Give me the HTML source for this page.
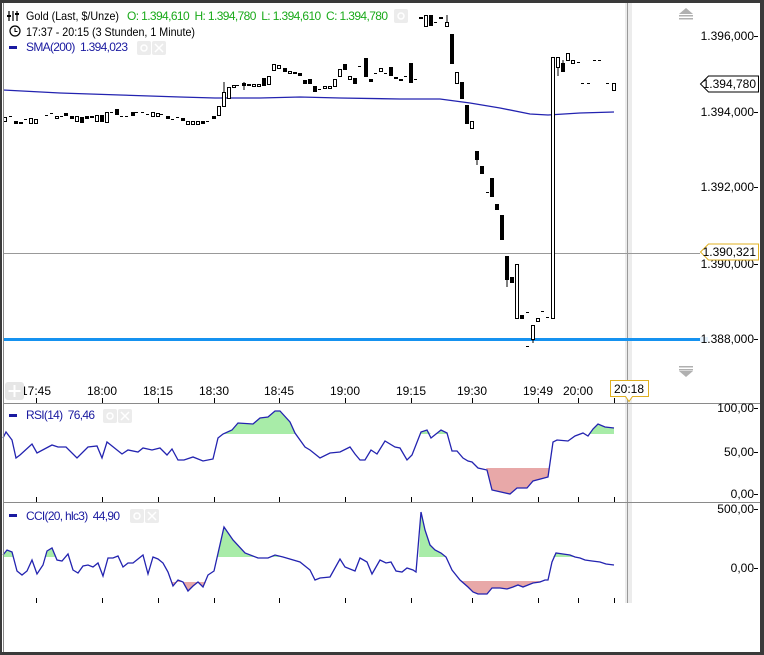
<!DOCTYPE html>
<html><head><meta charset="utf-8"><style>
body{margin:0;width:764px;height:655px;overflow:hidden;background:#fff;font-family:"Liberation Sans",Arial,sans-serif;}
svg{position:absolute;left:0;top:0}
text{font-family:"Liberation Sans",Arial,sans-serif;font-size:12px}
</style></head><body>
<svg width="764" height="655" viewBox="0 0 764 655" xmlns="http://www.w3.org/2000/svg">
<rect x="0" y="0" width="764" height="655" fill="#fff"/>
<rect x="625" y="3" width="7" height="600" fill="#ececec"/>
<line x1="627.5" y1="3" x2="627.5" y2="603" stroke="#999" stroke-width="1"/>
<line x1="3" y1="403.5" x2="760" y2="403.5" stroke="#8a8a8a"/>
<line x1="3" y1="502.5" x2="760" y2="502.5" stroke="#8a8a8a"/>
<line x1="3" y1="253.5" x2="700" y2="253.5" stroke="#999"/>
<rect x="3" y="338" width="697" height="3" fill="#1592f0"/>
<rect x="700" y="337" width="8" height="5" fill="#e4f1fc"/>
<polyline fill="none" stroke="#2323b0" stroke-width="1.3" points="3,90 60,93 120,95 180,97 215,98 260,98 300,97 340,98 400,99 440,99 470,103 500,108 530,114 548,115 580,113 614,112"/>
<g fill="#000" stroke="none">
<rect x="14" y="121" width="4" height="3"/><rect x="19" y="122" width="4" height="2"/><rect x="64" y="113" width="4" height="3"/><rect x="70" y="116" width="4" height="3"/><rect x="80" y="117" width="4" height="6"/><rect x="85" y="116" width="4" height="3"/><rect x="90" y="116" width="4" height="2"/><rect x="100" y="115" width="4" height="7"/><rect x="115" y="109" width="4" height="6"/><rect x="131" y="112" width="4" height="4"/><rect x="166" y="116" width="4" height="3"/><rect x="181" y="118" width="4" height="3"/><rect x="201" y="121" width="4" height="3"/><rect x="212" y="116" width="4" height="3"/>
<rect x="242" y="83" width="4" height="3"/><rect x="247" y="84" width="4" height="2"/><rect x="262" y="78" width="4" height="8"/><rect x="283" y="68" width="4" height="4"/><rect x="293" y="72" width="4" height="2"/><rect x="298" y="73" width="4" height="3"/><rect x="303" y="80" width="4" height="4"/><rect x="308" y="79" width="4" height="5"/><rect x="313" y="86" width="4" height="6"/><rect x="343" y="64" width="4" height="6"/><rect x="353" y="78" width="4" height="6"/><rect x="364" y="58" width="4" height="19"/><rect x="369" y="79" width="4" height="3"/><rect x="389" y="67" width="4" height="9"/><rect x="394" y="77" width="4" height="2"/><rect x="399" y="79" width="4" height="2"/><rect x="409" y="63" width="4" height="20"/>
<rect x="419" y="17" width="4" height="2"/><rect x="429" y="15" width="4" height="11"/><rect x="439" y="17" width="4" height="2"/><rect x="450" y="34" width="4" height="30"/><rect x="460" y="82" width="4" height="17"/><rect x="465" y="105" width="4" height="19"/><rect x="475" y="151" width="4" height="9"/><rect x="480" y="166" width="4" height="8"/><rect x="490" y="178" width="4" height="19"/><rect x="495" y="204" width="4" height="6"/><rect x="500" y="215" width="4" height="25"/><rect x="505" y="256" width="4" height="24"/><rect x="510" y="277" width="4" height="6"/><rect x="520" y="315" width="4" height="4"/><rect x="561" y="63" width="4" height="9"/>
</g>
<g fill="#000">
<rect x="9" y="116" width="3" height="1"/><rect x="24" y="119" width="3" height="1"/><rect x="45" y="115" width="3" height="1"/><rect x="50" y="113" width="3" height="1"/><rect x="60" y="116" width="3" height="1"/><rect x="110" y="112" width="3" height="1"/><rect x="120" y="116" width="3" height="1"/><rect x="125" y="116" width="3" height="1"/><rect x="135" y="112" width="3" height="1"/><rect x="141" y="112" width="3" height="1"/><rect x="146" y="114" width="3" height="1"/><rect x="160" y="114" width="3" height="1"/><rect x="171" y="119" width="3" height="1"/><rect x="176" y="117" width="3" height="1"/><rect x="206" y="121" width="3" height="1"/><rect x="236" y="85" width="3" height="1"/><rect x="318" y="89" width="3" height="1"/><rect x="358" y="66" width="3" height="1"/><rect x="374" y="73" width="3" height="1"/><rect x="384" y="73" width="3" height="1"/><rect x="404" y="76" width="3" height="1"/><rect x="414" y="79" width="3" height="1"/><rect x="434" y="22" width="3" height="1"/><rect x="486" y="192" width="3" height="1"/><rect x="526" y="312" width="3" height="1"/><rect x="541" y="311" width="3" height="1"/><rect x="546" y="317" width="3" height="1"/><rect x="577" y="62" width="3" height="1"/><rect x="581" y="83" width="3" height="1"/><rect x="587" y="83" width="3" height="1"/><rect x="593" y="60" width="3" height="1"/><rect x="598" y="60" width="3" height="1"/><rect x="606" y="83" width="3" height="1"/><rect x="526" y="346" width="3" height="1"/>
</g>
<g fill="#fff" stroke="#000" stroke-width="1">
<rect x="3.5" y="117.5" width="3" height="4"/><rect x="29.5" y="118.5" width="3" height="5"/><rect x="34.5" y="119.5" width="3" height="4"/><rect x="55.5" y="116.5" width="3" height="2"/><rect x="75.5" y="116.5" width="3" height="5"/><rect x="95.5" y="115.5" width="3" height="6"/><rect x="105.5" y="112.5" width="3" height="10"/><rect x="151.5" y="112.5" width="3" height="4"/><rect x="156.5" y="113.5" width="3" height="3"/><rect x="186.5" y="121.5" width="3" height="3"/><rect x="191.5" y="121.5" width="3" height="3"/><rect x="196.5" y="121.5" width="3" height="3"/>
<rect x="217.5" y="106.5" width="3" height="9"/><rect x="222.5" y="92.5" width="3" height="14"/><rect x="227.5" y="87.5" width="3" height="11"/><rect x="232.5" y="85.5" width="3" height="2"/><rect x="252.5" y="84.5" width="3" height="2"/><rect x="257.5" y="84.5" width="3" height="2"/><rect x="267.5" y="76.5" width="3" height="8"/><rect x="272.5" y="64.5" width="3" height="6"/><rect x="277.5" y="65.5" width="3" height="3"/><rect x="288.5" y="71.5" width="3" height="2"/><rect x="323.5" y="86.5" width="3" height="2"/><rect x="328.5" y="86.5" width="3" height="2"/><rect x="333.5" y="79.5" width="3" height="7"/><rect x="338.5" y="69.5" width="3" height="7"/><rect x="348.5" y="76.5" width="3" height="3"/><rect x="379.5" y="68.5" width="3" height="3"/>
<rect x="424.5" y="15.5" width="3" height="11"/><rect x="445.5" y="22.5" width="3" height="4"/><rect x="455.5" y="72.5" width="3" height="11"/><rect x="470.5" y="121.5" width="3" height="7"/><rect x="515.5" y="264.5" width="3" height="54"/><rect x="531.5" y="325.5" width="3" height="14"/><rect x="536.5" y="318.5" width="3" height="3"/><rect x="551.5" y="57.5" width="3" height="261"/><rect x="556.5" y="57.5" width="3" height="10"/><rect x="566.5" y="53.5" width="3" height="7"/><rect x="571.5" y="60.5" width="3" height="3"/><rect x="612.5" y="83.5" width="3" height="7"/>
</g>
<g stroke="#000" stroke-width="1">
<line x1="224" y1="82" x2="224" y2="92"/><line x1="244" y1="82" x2="244" y2="90"/><line x1="447" y1="15" x2="447" y2="22"/><line x1="477" y1="160" x2="477" y2="165"/><line x1="507" y1="280" x2="507" y2="287"/><line x1="558" y1="67" x2="558" y2="76"/><line x1="563" y1="60" x2="563" y2="63"/><line x1="533" y1="339" x2="533" y2="343"/>
</g>
<polygon fill="#a8eca8" points="223,434 232,430 238,423 253,424 260,418 268,417 275,411 280,411 290,422 295,434"/>
<polygon fill="#a8eca8" points="421,434 421,432 427,430 431,434"/><polygon fill="#a8eca8" points="437,434 441,430 447,433 447,434"/>
<polygon fill="#a8eca8" points="590,434 593,429 598,424 605,427 614,428 614,434"/>
<polygon fill="#e8a8a8" points="486,468 487,470 492,490 510,494 517,488 527,488 533,481 548,477 549,468"/>
<polyline fill="none" stroke="#2323b0" stroke-width="1.3" points="3,438 6,432 12,440 16,458 20,455 32,444 37,453 52,445 58,447 66,447 77,458 88,447 97,446 102,458 107,442 122,454 128,450 138,452 143,448 152,450 160,448 167,455 172,449 178,460 184,460 193,457 203,461 213,459 218,438 223,434 232,430 238,423 253,424 260,418 268,417 275,411 280,411 290,422 295,433 305,447 310,450 320,458 330,453 340,452 350,447 355,454 360,460 365,460 371,450 377,454 385,441 395,447 400,448 407,460 412,455 421,432 427,430 431,438 441,430 447,433 452,451 457,451 463,458 468,461 472,462 478,468 487,470 492,490 510,494 517,488 527,488 533,481 548,477 553,442 557,440 568,441 575,436 583,433 588,436 593,429 598,424 605,427 614,428"/>
<polygon fill="#a8eca8" points="3,557 3,555 7,550 12,552 13,557"/><polygon fill="#a8eca8" points="45,557 47,551 52,548 55,557"/>
<polygon fill="#a8eca8" points="217,557 224,527 233,540 245,553 258,558 258,557"/><polygon fill="#a8eca8" points="270,557 275,555 280,557"/>
<polygon fill="#a8eca8" points="419,557 421,512 425,530 430,545 435,550 441,553 446,557"/>
<polygon fill="#a8eca8" points="553,557 556,553 563,554 570,555 575,557"/>
<polygon fill="#e8a8a8" points="172,582 173,586 178,580 183,582 188,591 193,586 198,582 203,587 206,582"/>
<polygon fill="#e8a8a8" points="461,581 468,587 473,592 478,594 487,594 492,588 500,588 507,589 513,587 518,585 523,587 528,585 533,583 540,582 541,581"/>
<polyline fill="none" stroke="#2323b0" stroke-width="1.3" points="3,555 7,550 12,552 17,571 22,575 27,571 32,560 37,574 43,565 47,551 52,548 57,560 62,561 68,554 73,570 78,573 83,566 88,565 93,567 98,563 103,576 108,558 113,558 118,556 123,567 128,563 133,563 138,559 143,555 148,574 153,557 158,559 163,563 168,572 173,586 178,580 183,582 188,591 193,586 198,582 203,587 208,575 214,571 224,527 233,540 245,553 258,558 268,558 275,555 283,557 300,562 310,570 315,580 320,578 330,577 340,559 345,567 355,571 360,558 367,562 372,574 380,560 386,563 391,562 396,571 402,572 407,568 413,570 416,572 421,512 425,530 430,545 435,550 441,553 446,557 452,570 460,580 468,587 473,592 478,594 487,594 492,588 500,588 507,589 513,587 518,585 523,587 528,585 533,583 540,582 545,580 548,580 552,562 556,553 563,554 570,555 575,557 580,558 585,560 592,561 600,562 606,564 614,565"/>
<g stroke="#000" stroke-width="1">
<line x1="36.5" y1="398" x2="36.5" y2="403"/><line x1="102.5" y1="398" x2="102.5" y2="403"/><line x1="158.5" y1="398" x2="158.5" y2="403"/><line x1="214.5" y1="398" x2="214.5" y2="403"/><line x1="279.5" y1="398" x2="279.5" y2="403"/><line x1="345.5" y1="398" x2="345.5" y2="403"/><line x1="411.5" y1="398" x2="411.5" y2="403"/><line x1="472.5" y1="398" x2="472.5" y2="403"/><line x1="538.5" y1="398" x2="538.5" y2="403"/><line x1="578.5" y1="398" x2="578.5" y2="403"/><line x1="614.5" y1="398" x2="614.5" y2="403"/>
<line x1="36.5" y1="497" x2="36.5" y2="502"/><line x1="102.5" y1="497" x2="102.5" y2="502"/><line x1="158.5" y1="497" x2="158.5" y2="502"/><line x1="214.5" y1="497" x2="214.5" y2="502"/><line x1="279.5" y1="497" x2="279.5" y2="502"/><line x1="345.5" y1="497" x2="345.5" y2="502"/><line x1="411.5" y1="497" x2="411.5" y2="502"/><line x1="472.5" y1="497" x2="472.5" y2="502"/><line x1="538.5" y1="497" x2="538.5" y2="502"/><line x1="578.5" y1="497" x2="578.5" y2="502"/><line x1="614.5" y1="497" x2="614.5" y2="502"/>
<line x1="36.5" y1="598" x2="36.5" y2="603"/><line x1="102.5" y1="598" x2="102.5" y2="603"/><line x1="158.5" y1="598" x2="158.5" y2="603"/><line x1="214.5" y1="598" x2="214.5" y2="603"/><line x1="279.5" y1="598" x2="279.5" y2="603"/><line x1="345.5" y1="598" x2="345.5" y2="603"/><line x1="411.5" y1="598" x2="411.5" y2="603"/><line x1="472.5" y1="598" x2="472.5" y2="603"/><line x1="538.5" y1="598" x2="538.5" y2="603"/><line x1="578.5" y1="598" x2="578.5" y2="603"/><line x1="614.5" y1="598" x2="614.5" y2="603"/>
</g>
<g fill="#000" text-anchor="middle">
<text x="36" y="395">17:45</text><text x="102" y="395">18:00</text><text x="158" y="395">18:15</text><text x="214" y="395">18:30</text><text x="279" y="395">18:45</text><text x="345" y="395">19:00</text><text x="411" y="395">19:15</text><text x="472" y="395">19:30</text><text x="538" y="395">19:49</text><text x="578" y="395">20:00</text>
</g>
<rect x="5" y="382" width="19" height="18" rx="3" fill="#e6e6e6"/>
<path d="M14.5 385v12M8.5 391h12" stroke="#fff" stroke-width="2"/>
<path d="M610.5 380.5h38v16h-16l-3.5 5-3.5-5h-15z" fill="#fff" stroke="#e0b020"/>
<text x="629" y="393" text-anchor="middle" fill="#000">20:18</text>
<g fill="#000" text-anchor="end">
<text x="754" y="40">1.396,000</text><text x="754" y="116">1.394,000</text><text x="754" y="191">1.392,000</text><text x="754" y="268">1.390,000</text><text x="754" y="343">1.388,000</text>
<text x="754" y="412">100,00</text><text x="754" y="456">50,00</text><text x="754" y="498">0,00</text>
<text x="754" y="513">500,00</text><text x="754" y="572">0,00</text>
</g>
<g stroke="#000"><line x1="754" y1="36.5" x2="758" y2="36.5"/><line x1="754" y1="112.5" x2="758" y2="112.5"/><line x1="754" y1="187.5" x2="758" y2="187.5"/><line x1="754" y1="264.5" x2="758" y2="264.5"/><line x1="754" y1="339.5" x2="758" y2="339.5"/><line x1="754" y1="408.5" x2="758" y2="408.5"/><line x1="754" y1="452.5" x2="758" y2="452.5"/><line x1="754" y1="494.5" x2="758" y2="494.5"/><line x1="754" y1="509.5" x2="758" y2="509.5"/><line x1="754" y1="568.5" x2="758" y2="568.5"/></g>
<path d="M700.5 84l8-8h50v16h-50z" fill="#fff" stroke="#000"/>
<text x="756" y="88" text-anchor="end" fill="#000">1.394,780</text>
<path d="M700.5 252l8-8h50v16h-50z" fill="#fff" stroke="#e0b020"/>
<text x="756" y="256" text-anchor="end" fill="#000">1.390,321</text>
<path d="M679 14l7-6 7 6z" fill="#b0b0b0"/><rect x="679" y="15" width="14" height="1.5" fill="#b0b0b0"/><rect x="679" y="18" width="14" height="1.5" fill="#b0b0b0"/>
<rect x="679" y="366" width="14" height="1.5" fill="#b0b0b0"/><rect x="679" y="369" width="14" height="1.5" fill="#b0b0b0"/><path d="M679 371l7 6 7-6z" fill="#b0b0b0"/>
<g stroke="#000" stroke-width="1.2"><line x1="9" y1="11" x2="9" y2="21"/><line x1="13" y1="11" x2="13" y2="21"/><line x1="17" y1="11" x2="17" y2="21"/></g>
<rect x="7" y="15" width="4" height="2" fill="#000"/><rect x="15" y="13" width="4" height="2" fill="#000"/>
<text x="26" y="20" fill="#000" textLength="93" lengthAdjust="spacingAndGlyphs">Gold (Last, $/Unze)</text>
<text x="127" y="20" fill="#1aaa1a" textLength="261" lengthAdjust="spacing" xml:space="preserve">O: 1.394,610  H: 1.394,780  L: 1.394,610  C: 1.394,780</text>
<rect x="394" y="9" width="14" height="14" rx="2" fill="#ececec"/><circle cx="401" cy="16" r="3" fill="none" stroke="#fff" stroke-width="1.5"/>
<circle cx="15" cy="31" r="5" fill="none" stroke="#000" stroke-width="1.2"/><path d="M15 28v3.5h2.5" fill="none" stroke="#000"/>
<text x="26" y="36" fill="#000" textLength="169" lengthAdjust="spacingAndGlyphs">17:37 - 20:15 (3 Stunden, 1 Minute)</text>
<rect x="9" y="46" width="8" height="3" fill="#1a1aa0"/>
<text x="26" y="51" fill="#1a1aa0" textLength="102" lengthAdjust="spacing" xml:space="preserve">SMA(200)  1.394,023</text>
<rect x="137" y="41" width="14" height="14" rx="2" fill="#ececec"/><circle cx="144" cy="48" r="3" fill="none" stroke="#fff" stroke-width="1.5"/>
<rect x="152" y="41" width="14" height="14" rx="2" fill="#ececec"/><path d="M155 44l8 8M163 44l-8 8" stroke="#fff" stroke-width="1.5"/>
<rect x="9" y="414" width="8" height="3" fill="#1a1aa0"/>
<text x="26" y="419" fill="#1a1aa0" textLength="69" lengthAdjust="spacing" xml:space="preserve">RSI(14)  76,46</text>
<rect x="103" y="409" width="14" height="14" rx="2" fill="#ececec"/><circle cx="110" cy="416" r="3" fill="none" stroke="#fff" stroke-width="1.5"/>
<rect x="118" y="409" width="14" height="14" rx="2" fill="#ececec"/><path d="M121 412l8 8M129 412l-8 8" stroke="#fff" stroke-width="1.5"/>
<rect x="9" y="514" width="8" height="3" fill="#1a1aa0"/>
<text x="26" y="520" fill="#1a1aa0" textLength="94" lengthAdjust="spacing" xml:space="preserve">CCI(20, hlc3)  44,90</text>
<rect x="130" y="509" width="14" height="14" rx="2" fill="#ececec"/><circle cx="137" cy="516" r="3" fill="none" stroke="#fff" stroke-width="1.5"/>
<rect x="145" y="509" width="14" height="14" rx="2" fill="#ececec"/><path d="M148 512l8 8M156 512l-8 8" stroke="#fff" stroke-width="1.5"/>
<rect x="0" y="0" width="764" height="3" fill="#3a3a3a"/>
<rect x="0" y="0" width="2" height="655" fill="#3a3a3a"/>
<line x1="3.5" y1="3" x2="3.5" y2="652" stroke="#888"/>
<rect x="760" y="0" width="4" height="655" fill="#3a3a3a"/>
<rect x="0" y="652" width="764" height="3" fill="#3a3a3a"/>
</svg>
</body></html>
